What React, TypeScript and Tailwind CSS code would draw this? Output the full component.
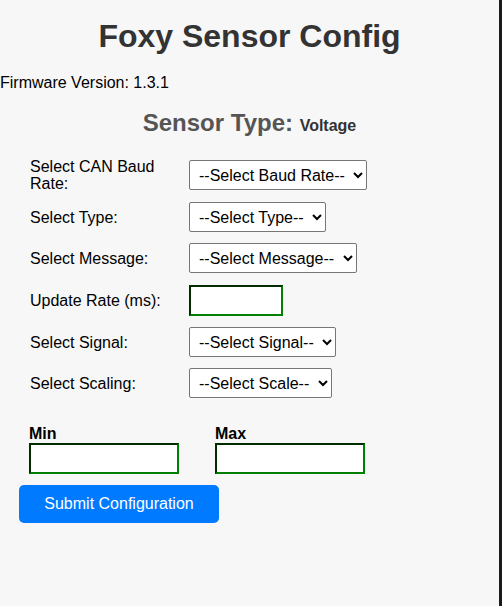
import React from "react";

const rows: { label: string; kind: "select" | "input"; text?: string; w: string; mt: string }[] = [
  { label: "Select CAN Baud Rate:", kind: "select", text: "--Select Baud Rate--", w: "w-[178px]", mt: "" },
  { label: "Select Type:", kind: "select", text: "--Select Type--", w: "w-[137px]", mt: "mt-[10px]" },
  { label: "Select Message:", kind: "select", text: "--Select Message--", w: "w-[168px]", mt: "mt-[11px]" },
  { label: "Update Rate (ms):", kind: "input", w: "w-[94px]", mt: "mt-[12px]" },
  { label: "Select Signal:", kind: "select", text: "--Select Signal--", w: "w-[147px]", mt: "mt-[11px]" },
  { label: "Select Scaling:", kind: "select", text: "--Select Scale--", w: "w-[143px]", mt: "mt-[11px]" },
];

export default function App() {
  return (
    <div className="flex h-[606px] w-full bg-[#f7f7f7] font-['Liberation_Sans',Arial,sans-serif] text-black">
      <main className="flex-1 flex flex-col">
        <h1 className="mt-[18px] text-center text-[32px] font-bold leading-[37px] text-[#333]">
          Foxy Sensor Config
        </h1>
        <p className="mt-[19px] text-[16px] leading-[18px]">Firmware Version: 1.3.1</p>
        <h2 className="mt-[17px] text-center text-[24px] font-bold leading-[28px] text-[#555]">
          Sensor Type: <span className="text-[16px] text-[#333]">Voltage</span>
        </h2>
        <form className="mt-[18px] flex flex-col pl-[29px]">
          {rows.map((r) => (
            <div key={r.label} className={`flex items-center ${r.mt}`}>
              <label className="w-[160px] pl-[1px] text-[16px] leading-[17px]">{r.label}</label>
              {r.kind === "select" ? (
                <select
                  className={`${r.w} h-[30px] rounded-[2px] border border-[#767676] bg-white pl-[5px] pr-[4px] text-[16px] text-black`}
                  defaultValue=""
                >
                  <option value="">{r.text}</option>
                </select>
              ) : (
                <input
                  type="text"
                  className={`${r.w} h-[31px] border-2 border-[green] bg-white [border-style:inset]`}
                />
              )}
            </div>
          ))}
          <div className="mt-[27px] flex gap-[36px]">
            <div className="flex flex-col">
              <label className="text-[16px] font-bold leading-[18px]">Min</label>
              <input
                type="text"
                className="w-[150px] h-[31px] border-2 border-[green] bg-white [border-style:inset]"
              />
            </div>
            <div className="flex flex-col">
              <label className="text-[16px] font-bold leading-[18px]">Max</label>
              <input
                type="text"
                className="w-[150px] h-[31px] border-2 border-[green] bg-white [border-style:inset]"
              />
            </div>
          </div>
          <button
            type="button"
            className="-ml-[10px] mt-[11px] h-[38px] w-[200px] rounded-[5px] bg-[#007bff] text-[16px] text-white"
          >
            Submit Configuration
          </button>
        </form>
      </main>
      <div className="w-[3px] bg-[#1a1a1a]" />
    </div>
  );
}
